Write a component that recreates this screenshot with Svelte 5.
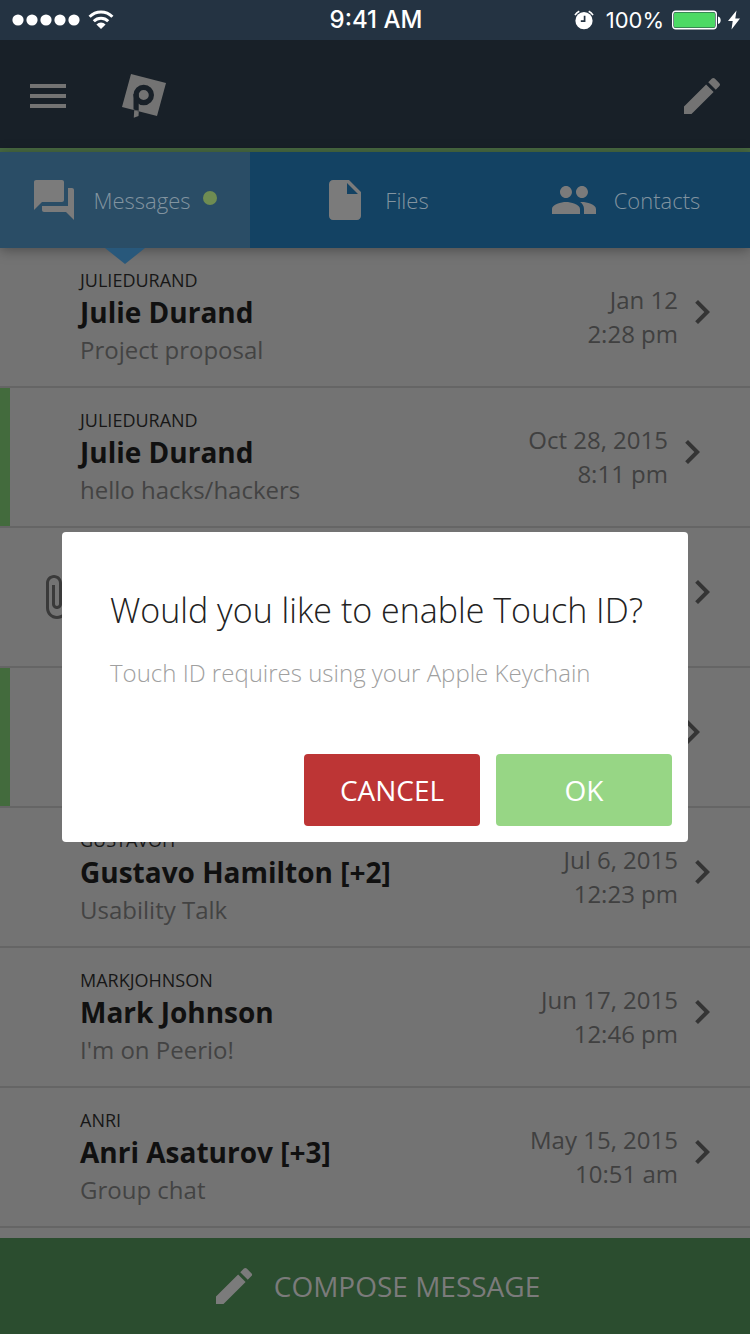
<script>
  const icons = {
    menu: 'M3 18h18v-2H3v2zm0-5h18v-2H3v2zm0-7v2h18V6H3z',
    pencil: 'M3 17.25V21h3.75L17.81 9.94l-3.75-3.75L3 17.25zM20.71 7.04a1 1 0 0 0 0-1.41l-2.34-2.34a1 1 0 0 0-1.41 0l-1.83 1.83 3.75 3.75 1.83-1.83z',
    chat: 'M21 6h-2v9H6v2c0 .55.45 1 1 1h11l4 4V7c0-.55-.45-1-1-1zm-4 6V3c0-.55-.45-1-1-1H3c-.55 0-1 .45-1 1v14l4-4h10c.55 0 1-.45 1-1z',
    file: 'M6 2c-1.1 0-1.99.9-1.99 2L4 20c0 1.1.89 2 1.99 2H18c1.1 0 2-.9 2-2V8l-6-6H6zm7 7V3.5L18.5 9H13z',
    people: 'M16 11c1.66 0 2.99-1.34 2.99-3S17.66 5 16 5c-1.66 0-3 1.34-3 3s1.34 3 3 3zm-8 0c1.66 0 2.99-1.34 2.99-3S9.66 5 8 5C6.34 5 5 6.34 5 8s1.34 3 3 3zm0 2c-2.33 0-7 1.17-7 3.5V19h14v-2.5c0-2.33-4.67-3.5-7-3.5zm8 0c-.29 0-.62.02-.97.05 1.16.84 1.97 1.97 1.97 3.45V19h6v-2.5c0-2.33-4.67-3.5-7-3.5z',
    clip: 'M16.5 6v11.5c0 2.21-1.79 4-4 4s-4-1.79-4-4V5c0-1.38 1.12-2.5 2.5-2.5s2.5 1.12 2.5 2.5v10.5c0 .55-.45 1-1 1s-1-.45-1-1V6H10v9.5c0 1.38 1.12 2.5 2.5 2.5s2.5-1.12 2.5-2.5V5c0-2.21-1.79-4-4-4S7 2.79 7 5v12.5c0 3.04 2.46 5.5 5.5 5.5s5.5-2.46 5.5-5.5V6h-1.5z',
    chevron: 'M10 6L8.59 7.41 13.17 12l-4.58 4.59L10 18l6-6z'
  };

  const tabs = [
    { label: 'Messages', icon: 'chat', active: true },
    { label: 'Files', icon: 'file' },
    { label: 'Contacts', icon: 'people' }
  ];

  const threads = [
    { user: 'JULIEDURAND', name: 'Julie Durand', subject: 'Project proposal', date: 'Jan 12', time: '2:28 pm' },
    { user: 'JULIEDURAND', name: 'Julie Durand', subject: 'hello hacks/hackers', date: 'Oct 28, 2015', time: '8:11 pm', unread: true },
    { clip: true },
    { unread: true },
    { user: 'GUSTAVOH', name: 'Gustavo Hamilton [+2]', subject: 'Usability Talk', date: 'Jul 6, 2015', time: '12:23 pm' },
    { user: 'MARKJOHNSON', name: 'Mark Johnson', subject: "I'm on Peerio!", date: 'Jun 17, 2015', time: '12:46 pm' },
    { user: 'ANRI', name: 'Anri Asaturov [+3]', subject: 'Group chat', date: 'May 15, 2015', time: '10:51 am' }
  ];

  let open = $state(true);
</script>

{#snippet icon(name)}
  <svg class="icon" viewBox="0 0 24 24" aria-hidden="true"><path d={icons[name]} /></svg>
{/snippet}

<div class="app">
  <div class="status">
    <div class="signal">
      <svg width="68" height="12" viewBox="0 0 68 12" aria-hidden="true">
        {#each [0, 1, 2, 3, 4] as i}<circle cx={6 + i * 14} cy="6" r="5.6" />{/each}
      </svg>
      <svg width="26" height="20" viewBox="0 0 26 20" aria-hidden="true">
        <g fill="none" stroke="#fff" stroke-width="3">
          <path d="M1.6 6.8a16.2 16.2 0 0 1 22.8 0" />
          <path d="M5.8 11.2a10.2 10.2 0 0 1 14.4 0" />
        </g>
        <path d="M13 19l-4.6-4.6a6.5 6.5 0 0 1 9.2 0z" />
      </svg>
    </div>
    <div class="clock">9:41 AM</div>
    <div class="power">
      <svg width="20" height="20" viewBox="0 0 20 20" aria-hidden="true">
        <circle cx="10" cy="10.7" r="8.6" />
        <path d="M1 5.2a11 11 0 0 1 4.3-4M19 5.2a11 11 0 0 0-4.3-4" fill="none" stroke="#fff" stroke-width="1.6" />
        <path d="M10.6 5.8v5.4H6.8" fill="none" stroke="#243342" stroke-width="1.7" />
      </svg>
      <span>100%</span>
      <svg width="50" height="20" viewBox="0 0 50 20" aria-hidden="true">
        <rect x="0.7" y="1.2" width="43.6" height="17.6" rx="3" fill="none" stroke="#fff" stroke-width="1.4" />
        <rect x="2" y="2.5" width="41" height="15" rx="1.6" fill="#4cd964" />
        <path d="M46 6.500c3.600.4 3.600 7.100 0 7.500z" />
      </svg>
      <svg width="12" height="20" viewBox="0 0 12 20" aria-hidden="true"><path d="M8.500.5L0 11h4.700L3.500 19.500 12 8.500H7.300z" /></svg>
    </div>
  </div>

  <header>
    <button class="plain" aria-label="Menu">{@render icon('menu')}</button>
    <svg class="logo" viewBox="0 0 48 48" aria-hidden="true">
      <path d="M11 2l35 9-9 33-35-9z" fill="#737373" />
      <circle cx="23.700" cy="23" r="7.700" fill="none" stroke="#182028" stroke-width="5.200" />
      <path d="M13.500 22h5.200v16.800l-5.200-1.400z" fill="#182028" />
      <path d="M14.200 38.200l4.600 1.200-.3 4.600-4.700 1.800z" fill="#737373" />
    </svg>
    <button class="plain edit" aria-label="New message">{@render icon('pencil')}</button>
  </header>

  <nav>
    {#each tabs as tab}
      <button class="tab" class:active={tab.active}>
        {@render icon(tab.icon)}
        <span>{tab.label}</span>
        {#if tab.active}<i class="dot"></i>{/if}
      </button>
    {/each}
  </nav>

  <ul class="threads">
    {#each threads as t}
      <li class:unread={t.unread}>
        <div class="lead">{#if t.clip}{@render icon('clip')}{/if}</div>
        <div class="who">
          {#if t.name}
            <div class="user">{t.user}</div>
            <div class="name">{t.name}</div>
            <div class="subject">{t.subject}</div>
          {/if}
        </div>
        <div class="when">
          {#if t.date}<div>{t.date}</div><div>{t.time}</div>{/if}
        </div>
        <div class="go">{@render icon('chevron')}</div>
      </li>
    {/each}
  </ul>

  <button class="compose">{@render icon('pencil')}<span>COMPOSE MESSAGE</span></button>

  {#if open}
    <div class="overlay">
      <div class="dialog" role="dialog" aria-labelledby="dialog-title">
        <h1 id="dialog-title">Would you like to enable Touch ID?</h1>
        <p>Touch ID requires using your Apple Keychain</p>
        <div class="actions">
          <button class="cancel" onclick={() => (open = false)}>CANCEL</button>
          <button class="ok" onclick={() => (open = false)}>OK</button>
        </div>
      </div>
    </div>
  {/if}
</div>

<style>
  .app {
    position: relative;
    display: flex;
    flex-direction: column;
    min-height: 100vh;
    background: #737373;
    font-family: 'Open Sans', 'Noto Sans', sans-serif;
  }
  button {
    border: 0;
    margin: 0;
    padding: 0;
    background: none;
    font-family: inherit;
    cursor: pointer;
  }
  svg { display: block; flex: none; }
  .icon { width: 48px; height: 48px; fill: currentColor; }

  .status {
    display: grid;
    grid-template-columns: 1fr auto 1fr;
    align-items: center;
    height: 40px;
    padding: 0 10px 0 12px;
    background: #243342;
    color: #fff;
    fill: #fff;
    font: 22px/40px Inter, sans-serif;
  }
  .signal, .power { display: flex; align-items: center; gap: 8px; }
  .power { justify-content: flex-end; gap: 6px; }
  .power span { padding: 0 2px 0 6px; }
  .clock { font-size: 24px; font-weight: 500; }

  header {
    display: flex;
    align-items: center;
    height: 112px;
    padding: 0 24px;
    background: #182028;
    box-shadow: inset 0 -4px #486a42;
  }
  .plain { color: #737373; }
  .logo { width: 48px; height: 48px; margin-left: 48px; }
  .edit { margin-left: auto; }

  nav {
    position: relative;
    display: flex;
    height: 96px;
    background: #134263;
    box-shadow: 0 2px 12px rgba(0, 0, 0, 0.35);
  }
  .tab {
    position: relative;
    flex: 1;
    display: flex;
    align-items: center;
    justify-content: center;
    gap: 16px;
    color: #7b7b7b;
    font-size: 22px;
    font-weight: 300;
  }
  .tab span { color: #8294a0; }
  .active { background: #2a4d66; }
  .active::after {
    content: '';
    position: absolute;
    top: 100%;
    left: 50%;
    margin-left: -20px;
    border: 20px solid transparent;
    border-top: 16px solid #28587b;
    border-bottom: 0;
  }
  .dot { width: 14px; height: 14px; margin: 0 4px 4px -4px; border-radius: 50%; background: #6f8c52; }

  .threads { flex: 1; margin: 0; padding: 0; list-style: none; }
  li {
    display: flex;
    align-items: center;
    box-sizing: border-box;
    height: 140px;
    padding-right: 24px;
    border-bottom: 2px solid #656565;
  }
  .unread { padding-right: 34px; box-shadow: inset 10px 0 #436b3d; }
  .lead { display: flex; justify-content: flex-end; width: 80px; color: #3a3a3a; }
  .go .icon { margin-bottom: 10px; }
  .who { flex: 1; padding-top: 2px; }
  .user { font-size: 18px; line-height: 28px; color: #171717; }
  .name { font-size: 28px; line-height: 36px; font-weight: 700; color: #101010; }
  .subject { font-size: 24px; line-height: 40px; color: #434343; }
  .when { font-size: 24px; line-height: 34px; color: #404040; text-align: right; }
  .go { color: #343434; }

  .compose {
    display: flex;
    align-items: center;
    justify-content: center;
    gap: 16px;
    height: 96px;
    background: #2b4d2f;
    color: #7b7b7b;
    font-size: 28px;
  }

  .overlay {
    position: absolute;
    inset: 40px 0 0;
    display: flex;
    align-items: center;
    justify-content: center;
    padding: 0 62px;
  }
  .dialog {
    box-sizing: border-box;
    flex: 1;
    padding: 48px 16px 16px 48px;
    border-radius: 4px;
    background: #fff;
  }
  h1 { margin: 0; font-size: 34px; line-height: 60px; font-weight: 300; color: #222; }
  p { margin: 0; font-size: 24px; line-height: 66px; font-weight: 300; color: #a0a0a0; }
  .actions { display: flex; justify-content: flex-end; gap: 16px; margin-top: 48px; }
  .actions button {
    width: 176px;
    height: 72px;
    border-radius: 4px;
    color: #fff;
    font-size: 28px;
  }
  .cancel { background: #bd3535; }
  .ok { background: #97d685; }
</style>
